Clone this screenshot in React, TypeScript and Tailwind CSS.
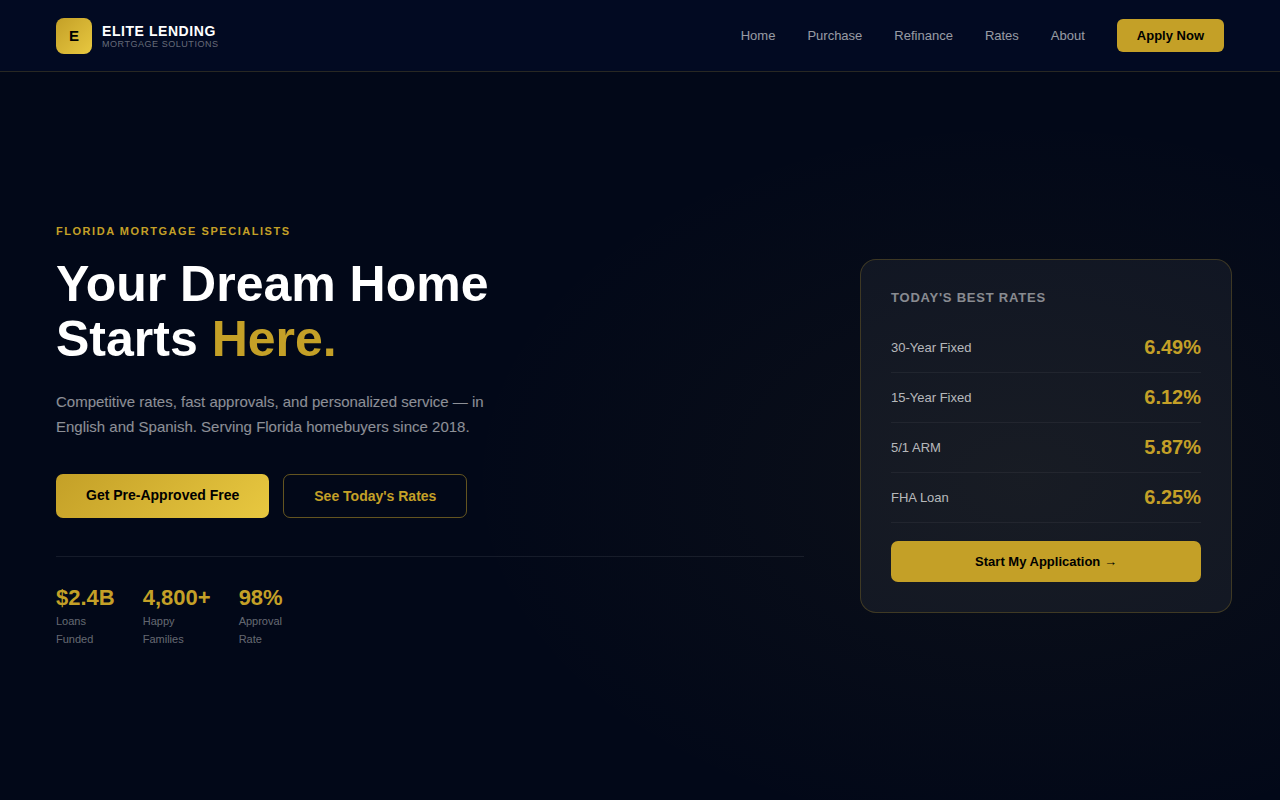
const NAV_LINKS = ['Home', 'Purchase', 'Refinance', 'Rates', 'About'];

const STATS = [
  { value: '$2.4B', label: ['Loans', 'Funded'] },
  { value: '4,800+', label: ['Happy', 'Families'] },
  { value: '98%', label: ['Approval', 'Rate'] },
];

const RATES = [
  { name: '30-Year Fixed', rate: '6.49%' },
  { name: '15-Year Fixed', rate: '6.12%' },
  { name: '5/1 ARM', rate: '5.87%' },
  { name: 'FHA Loan', rate: '6.25%' },
];

function Header() {
  return (
    <header className="flex items-center justify-between h-18 px-14 bg-[#020a22] border-b border-[#c4a027]/20">
      <a href="#" className="flex items-center gap-2.5">
        <span className="flex items-center justify-center size-9 rounded-lg bg-linear-135 from-[#c4a027] to-[#e8c840] text-[15px] leading-4 font-bold text-black">
          E
        </span>
        <span className="flex flex-col">
          <span className="text-sm leading-4 font-bold tracking-[0.04em] text-white">ELITE LENDING</span>
          <span className="text-[9px] leading-2.5 tracking-[0.06em] text-white/40">MORTGAGE SOLUTIONS</span>
        </span>
      </a>
      <nav className="flex items-center gap-8 text-[13px]">
        {NAV_LINKS.map((link) => (
          <a key={link} href="#" className="text-white/60 hover:text-white">
            {link}
          </a>
        ))}
        <button className="px-5 py-2 leading-[17px] rounded-md bg-[#c4a027] font-bold text-black">Apply Now</button>
      </nav>
    </header>
  );
}

function RatesCard() {
  return (
    <aside className="w-[372px] shrink-0 p-[30px] rounded-2xl border border-[#c4a027]/25 bg-white/5">
      <h2 className="mb-[18px] text-[13px] leading-[15px] font-bold tracking-[0.06em] text-white/50">
        TODAY'S BEST RATES
      </h2>
      <table className="w-full">
        <tbody>
          {RATES.map((item) => (
            <tr key={item.name} className="h-[50px] border-b border-white/5">
              <th scope="row" className="text-left text-[13px] font-normal text-white/70">
                {item.name}
              </th>
              <td className="pb-0.5 text-right text-xl font-bold text-[#c4a027]">{item.rate}</td>
            </tr>
          ))}
        </tbody>
      </table>
      <button className="w-full mt-[18px] py-3 rounded-[7px] bg-[#c4a027] text-[13px] leading-[17px] font-bold text-black">
        Start My Application →
      </button>
    </aside>
  );
}

export default function App() {
  return (
    <div className="flex flex-col min-h-screen bg-[#020818] font-['Liberation_Sans',Arial,sans-serif]">
      <Header />
      <main className="flex flex-1 items-center gap-14 pl-14 pr-12 bg-[radial-gradient(ellipse_44%_50%_at_80%_56%,#c4a0270d,transparent)]">
        <section className="flex-1">
          <p className="mb-[19px] text-[11px] leading-3.5 font-bold tracking-[0.14em] text-[#c4a027]">
            FLORIDA MORTGAGE SPECIALISTS
          </p>
          <h1 className="mb-[22px] text-[50px] leading-[55px] font-bold text-white">
            Your Dream Home
            <br />
            Starts <span className="text-[#c4a027]">Here.</span>
          </h1>
          <p className="max-w-[440px] mb-[35px] text-[15px] leading-[25px] text-white/55">
            Competitive rates, fast approvals, and personalized service — in English and Spanish. Serving Florida
            homebuyers since 2018.
          </p>
          <div className="flex gap-3.5">
            <button className="px-[30px] pt-3 pb-3.5 rounded-[7px] bg-linear-135 from-[#c4a027] to-[#e8c840] text-sm leading-[18px] font-bold text-black">
              Get Pre-Approved Free
            </button>
            <button className="px-[30px] py-3 rounded-[7px] border border-[#c4a027]/50 text-sm leading-[18px] font-bold text-[#c4a027]">
              See Today's Rates
            </button>
          </div>
          <div className="flex gap-7 mt-[38px] pt-7 border-t border-white/8">
            {STATS.map((stat) => (
              <div key={stat.value}>
                <div className="mb-0.5 text-[22px] leading-[25px] font-bold text-[#c4a027]">{stat.value}</div>
                <div className="text-[11px] leading-[18px] text-white/40">
                  {stat.label[0]}
                  <br />
                  {stat.label[1]}
                </div>
              </div>
            ))}
          </div>
        </section>
        <RatesCard />
      </main>
    </div>
  );
}
